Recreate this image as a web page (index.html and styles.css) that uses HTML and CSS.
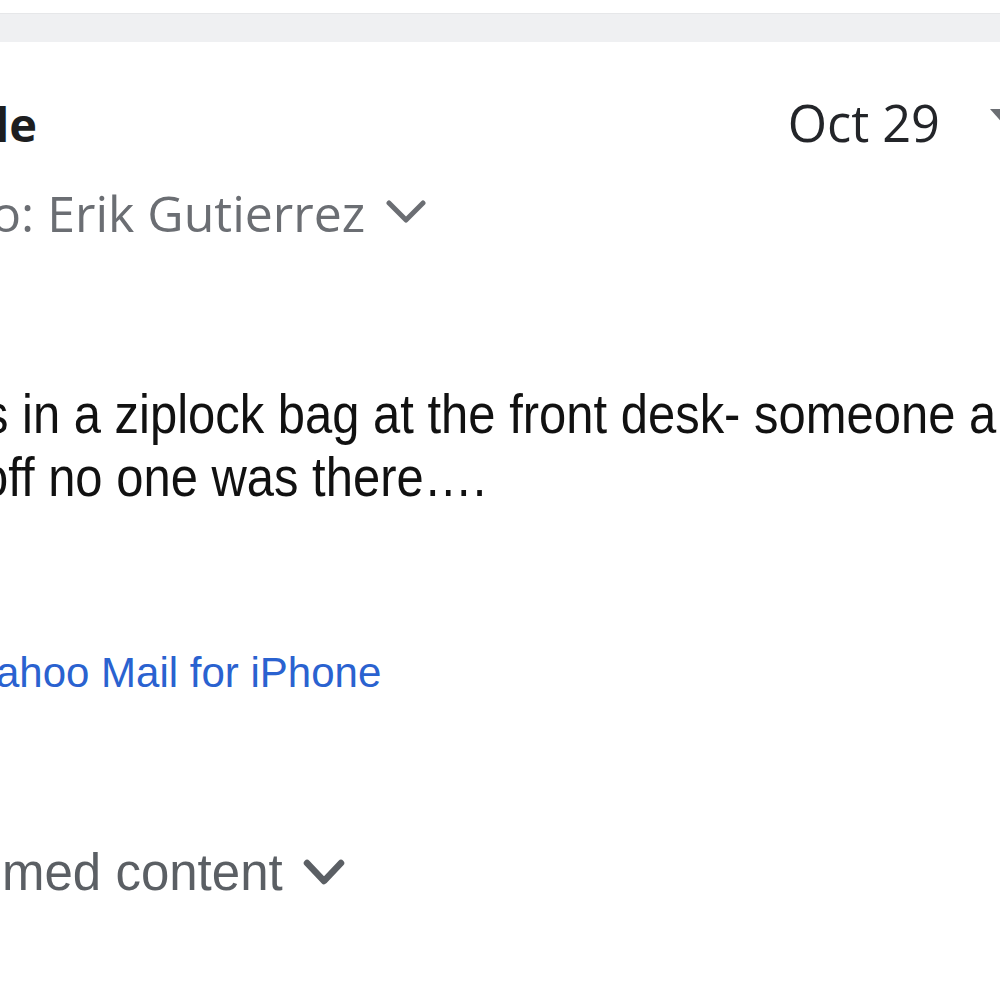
FILE: index.html
```html
<!DOCTYPE html>
<html>
<head>
<meta charset="utf-8">
<link rel="stylesheet" href="styles.css">
</head>
<body>
<div class="topbar"></div>
<div class="message">
  <div class="head-row">
    <div class="sender">le</div>
    <div class="date-wrap">
      <span class="date">Oct 29</span>
      <svg class="more" width="40" height="30" viewBox="0 0 40 30"><path d="M2 3 L18 21 L34 3 Z" fill="#6b6e73"/></svg>
    </div>
  </div>
  <div class="to-row">
    <span class="to">o: Erik Gutierrez</span>
    <svg class="chev" width="40" height="26" viewBox="0 0 40 26"><path d="M3 3 L20 20 L37 3" fill="none" stroke="#6b6e73" stroke-width="5" stroke-linecap="round" stroke-linejoin="round"/></svg>
  </div>
  <div class="body-text">
    <p class="line l1">s in a ziplock bag at the front desk- someone a</p>
    <p class="line l2">off no one was there….</p>
  </div>
  <div class="sig"><a class="sig-link">ahoo Mail for iPhone</a></div>
  <div class="trim">
    <span class="trim-text">med content</span>
    <svg class="chev2" width="42" height="30" viewBox="0 0 42 30"><path d="M4 5 L21 23 L38 5" fill="none" stroke="#5b5f64" stroke-width="6.5" stroke-linecap="round" stroke-linejoin="round"/></svg>
  </div>
</div>
</body>
</html>
```
FILE: styles.css
```css
html, body {
  margin: 0;
  padding: 0;
  background: #ffffff;
  width: 1000px;
  height: 1000px;
  overflow: hidden;
}
.topbar {
  margin-top: 13px;
  height: 28px;
  background: #eff0f2;
  border-top: 1px solid #e6e7e9;
}
.message {
  display: flex;
  flex-direction: column;
}
.head-row {
  display: flex;
  justify-content: space-between;
  align-items: baseline;
  margin-top: 46px;
  height: 60px;
  font-family: "Open Sans", sans-serif;
}
.sender {
  font-weight: 700;
  font-size: 47px;
  color: #1d1e20;
  margin-left: -5px;
  white-space: nowrap;
}
.date-wrap {
  display: flex;
  align-items: center;
  gap: 48px;
  margin-right: -28px;
}
.date {
  font-size: 50.5px;
  color: #232529;
}
.more {
  align-self: flex-start;
  margin-top: 18px;
}
.to-row {
  display: flex;
  align-items: center;
  gap: 21px;
  margin-top: 31px;
  font-family: "Open Sans", sans-serif;
  white-space: nowrap;
}
.to {
  font-size: 50px;
  color: #6b6e73;
  margin-left: -9px;
}
.chev {
  margin-top: 0;
}
.body-text {
  margin-top: 136px;
  font-family: "Liberation Sans", Arial, sans-serif;
  font-size: 55px;
  color: #111;
  white-space: nowrap;
}
.line {
  margin: 0;
  line-height: 63px;
  transform: scaleX(0.89);
  transform-origin: 0 50%;
}
.l1 { margin-left: -16px; }
.l2 { margin-left: -19px; }
.sig {
  margin-top: 140px;
  font-family: "Liberation Sans", Arial, sans-serif;
  font-size: 42px;
  white-space: nowrap;
}
.sig-link {
  color: #2a62d0;
  margin-left: -4px;
  display: inline-block;
}
.trim {
  display: flex;
  align-items: center;
  gap: 20px;
  margin-top: 146px;
  font-family: "Liberation Sans", Arial, sans-serif;
  white-space: nowrap;
}
.trim-text {
  font-size: 51px;
  color: #5b5f64;
  margin-left: 2px;
}
```
